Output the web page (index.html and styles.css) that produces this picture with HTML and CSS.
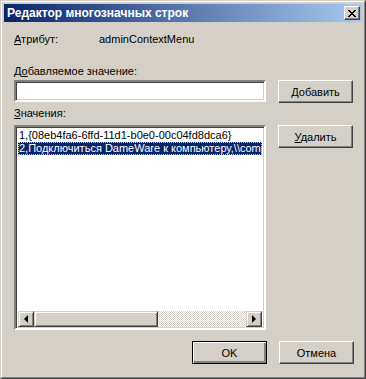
FILE: index.html
```html
<!DOCTYPE html>
<html lang="ru">
<head>
  <meta charset="UTF-8" />
  <title>Редактор многозначных строк</title>
  <link rel="stylesheet" href="styles.css">
</head>
<body>
  <div class="window">
    <div class="frame">
      <div class="titlebar">
        <span class="title">Редактор многозначных строк</span>
        <button class="close" type="button">
          <svg width="8" height="7" viewBox="0 0 8 7">
            <path d="M0 0h2v1h1v1h2v-1h1v-1h2v1h-1v1h-1v1h-1v1h1v1h1v1h1v1h-2v-1h-1v-1h-2v1h-1v1h-2v-1h1v-1h1v-1h1v-1h-1v-1h-1v-1h-1z" fill="#000"/>
          </svg>
        </button>
      </div>

      <div class="content">
        <div class="attr">
          <span class="attr-label"><u>А</u>трибут:</span>
          <span>adminContextMenu</span>
        </div>

        <div class="label label-add">Д<u>о</u>бавляемое значение:</div>
        <div class="row">
          <input class="field" type="text" />
          <button class="btn" type="button"><u>Д</u>обавить</button>
        </div>

        <div class="label label-values"><u>З</u>начения:</div>
        <div class="row row-list">
          <div class="listbox">
            <div class="items">
              <div class="item">1,{08eb4fa6-6ffd-11d1-b0e0-00c04fd8dca6}</div>
              <div class="item selected">2,Подключиться DameWare к компьютеру,\\computer</div>
            </div>
            <div class="hscroll">
              <span class="arrow"><i class="tri tri-left"></i></span>
              <span class="thumb"></span>
              <span class="track"></span>
              <span class="arrow"><i class="tri tri-right"></i></span>
            </div>
          </div>
          <button class="btn" type="button"><u>У</u>далить</button>
        </div>

        <div class="footer">
          <button class="btn btn-default" type="button">OK</button>
          <button class="btn" type="button">Отмена</button>
        </div>
      </div>
    </div>
  </div>
</body>
</html>
```

FILE: styles.css
```css
* {
  box-sizing: border-box;
}

body {
  margin: 0;
  font-family: "Liberation Sans", Arial, sans-serif;
  font-size: 11px;
  color: #000;
  background: #fff;
}

u {
  text-decoration: underline;
  text-underline-offset: 1px;
}

.window {
  width: 366px;
  height: 379px;
  background: #d4d0c8;
  border: 1px solid;
  border-color: #d4d0c8 #404040 #404040 #d4d0c8;
}

.frame {
  height: 100%;
  border: 1px solid;
  border-color: #fff #808080 #808080 #fff;
  padding: 2px;
  display: flex;
  flex-direction: column;
}

.titlebar {
  height: 18px;
  background: linear-gradient(to right, #0a246a, #a6caf0);
  display: flex;
  align-items: center;
  justify-content: space-between;
  padding: 0 2px 0 3px;
}

.title {
  color: #fff;
  font-weight: bold;
  font-size: 12px;
}

.close {
  width: 16px;
  height: 14px;
  padding: 0;
  background: #d4d0c8;
  border: 1px solid;
  border-color: #fff #404040 #404040 #fff;
  box-shadow: inset -1px -1px 0 #808080;
  display: flex;
  align-items: center;
  justify-content: center;
}

.content {
  flex: 1;
  padding: 11px 8px 0 10px;
  display: flex;
  flex-direction: column;
}

.attr {
  display: flex;
  line-height: 13px;
}

.attr-label {
  width: 85px;
}

.label {
  line-height: 13px;
}

.label-add {
  margin-top: 19px;
  margin-bottom: 2px;
}

.label-values {
  margin-top: 4px;
  margin-bottom: 5px;
}

.row {
  display: flex;
  gap: 12px;
  align-items: flex-start;
}

.field {
  width: 252px;
  height: 22px;
  margin: 0;
  background: #fff;
  border: 2px solid;
  border-color: #808080 #fff #fff #808080;
  box-shadow: inset 1px 1px 0 #404040, inset -1px -1px 0 #d4d0c8;
  outline: none;
}

.btn {
  width: 75px;
  height: 23px;
  padding: 0;
  font-family: inherit;
  font-size: 11px;
  color: #000;
  background: #d4d0c8;
  border: 1px solid;
  border-color: #fff #404040 #404040 #fff;
  box-shadow: inset -1px -1px 0 #808080;
}

.btn-default {
  border: 1px solid #000;
  box-shadow: inset 1px 1px 0 #fff, inset -2px -2px 0 #808080, inset -1px -1px 0 #404040;
}

.listbox {
  width: 252px;
  height: 205px;
  background: #fff;
  border: 2px solid;
  border-color: #808080 #fff #fff #808080;
  box-shadow: inset 1px 1px 0 #404040, inset -1px -1px 0 #d4d0c8;
  padding: 2px 2px 1px;
  display: flex;
  flex-direction: column;
}

.items {
  flex: 1;
  overflow: hidden;
}

.item {
  height: 13px;
  line-height: 13px;
  padding-left: 1px;
  white-space: nowrap;
  overflow: hidden;
}

.item.selected {
  background: #0a246a;
  color: #fff;
  outline: 1px dotted #d4d0c8;
  outline-offset: -1px;
}

.hscroll {
  height: 16px;
  display: flex;
}

.arrow {
  width: 16px;
  height: 16px;
  background: #d4d0c8;
  border: 1px solid;
  border-color: #d4d0c8 #404040 #404040 #d4d0c8;
  box-shadow: inset 1px 1px 0 #fff, inset -1px -1px 0 #808080;
  display: flex;
  align-items: center;
  justify-content: center;
}

.tri {
  width: 0;
  height: 0;
  border-top: 4px solid transparent;
  border-bottom: 4px solid transparent;
}

.tri-left {
  border-right: 4px solid #000;
}

.tri-right {
  border-left: 4px solid #000;
}

.thumb {
  width: 124px;
  background: #d4d0c8;
  border: 1px solid;
  border-color: #d4d0c8 #404040 #404040 #d4d0c8;
  box-shadow: inset 1px 1px 0 #fff, inset -1px -1px 0 #808080;
}

.track {
  flex: 1;
  background-color: #fff;
  background-image: conic-gradient(#d4d0c8 25%, #fff 0 50%, #d4d0c8 0 75%, #fff 0);
  background-size: 2px 2px;
}

.footer {
  margin-top: 11px;
  display: flex;
  justify-content: flex-end;
  gap: 12px;
}
```
